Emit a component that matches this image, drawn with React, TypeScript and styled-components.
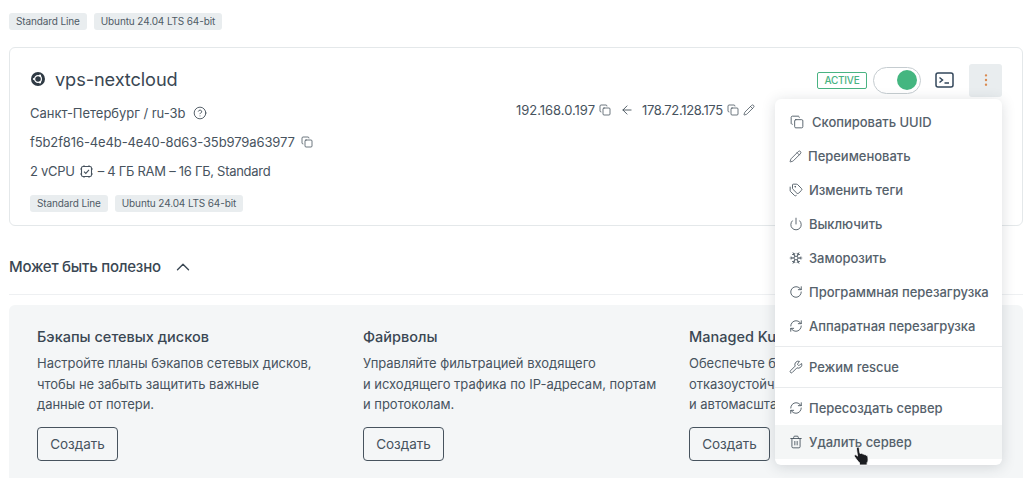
import React from "react";
import styled, { createGlobalStyle } from "styled-components";
import { ArrowLeft, ChevronUp, CircleHelp, Copy, EllipsisVertical, Pencil, Power, RefreshCw, RotateCw, Snowflake, Tags, Trash2, Wrench } from "lucide-react";

const Global = createGlobalStyle`
  html, body { margin: 0; padding: 0; background: #fff; overflow: hidden; }
  body { font-family: Inter, "Noto Sans", sans-serif; color: #47535e; }
  * { box-sizing: border-box; }
`;
const Page = styled.div`
  position: relative; width: 1024px; height: 478px; overflow: hidden;
  padding: 13px 1px 0 9px;
`;
const TagRow = styled.div`display: flex; gap: 7px;`;
const Tag = styled.span`
  height: 17px; padding: 0 7px; border-radius: 3px; background: #e9edef;
  font-size: 10px; line-height: 17px; color: #4f5b66; letter-spacing: -0.12px; white-space: nowrap;
`;
const Card = styled.section`
  height: 179px; margin-top: 17px; border: 1px solid #e4e8ea; border-radius: 6px; padding: 20px 20px 0;
  display: flex; flex-direction: column; position: relative;
`;
const TitleRow = styled.div`display: flex; align-items: center; height: 24px; gap: 9px;`;
const OsLogo = styled.svg`width: 16px; height: 16px; margin-top: -2px;`;
const Title = styled.h1`margin: -3px 0 0; font-size: 18.2px; font-weight: 400; color: #3a4753; line-height: 24px; letter-spacing: -0.1px;`;
const Controls = styled.div`margin-left: auto; display: flex; align-items: center;`;
const Active = styled.span`
  width: 50px; height: 17px; border: 1px solid #49b382; border-radius: 2px; color: #49b382;
  font-size: 10px; font-weight: 500; line-height: 15px; text-align: center; letter-spacing: -0.25px;
`;
const Switch = styled.div`
  width: 48px; height: 27px; margin-left: 6px; border: 1px solid #c5ccd0; border-radius: 14px;
  display: flex; align-items: center; justify-content: flex-end; padding-right: 3px;
`;
const Knob = styled.span`width: 20px; height: 20px; border-radius: 50%; background: #44b680;`;
const Terminal = styled.svg`margin-left: 14px; width: 20px; height: 18px;`;
const MoreButton = styled.button`
  width: 33px; height: 33px; margin-left: 14px; border: 0; border-radius: 3px; background: #e9edef; padding: 0;
  display: flex; align-items: center; justify-content: center; color: #d9894f;
`;
const InfoGrid = styled.div`display: grid; grid-template-columns: 486px auto; margin-top: 6px;`;
const Column = styled.div`display: flex; flex-direction: column;`;
const IpColumn = styled(Column)`margin-top: -3px;`;
const InfoLine = styled.div`
  height: 29px; display: flex; align-items: center; gap: 5px; font-size: 13px; color: #47535e; white-space: nowrap; letter-spacing: -0.03px;
`;
const UuidLine = styled(InfoLine)`letter-spacing: -0.11px;`;
const SpecLine = styled(InfoLine)`letter-spacing: -0.28px; gap: 5px; height: 30px;`;
const IpLine = styled(InfoLine)`gap: 4px;`;
const TightIp = styled.span`letter-spacing: -0.35px;`;
const Arrow = styled(ArrowLeft)`margin: 0 4px 0 5px;`;
const CardTags = styled(TagRow)`margin-top: 9px;`;
const Section = styled.div`height: 69px; border-bottom: 1px solid #eef0f2; display: flex; align-items: center; gap: 11px; padding-top: 13px;`;
const SectionTitle = styled.h2`margin: 0; font-size: 15px; font-weight: 500; color: #3a4753; line-height: 20px; letter-spacing: -0.24px;`;
const Panel = styled.div`
  margin-top: 10px; height: 190px; background: #f4f6f7; border-radius: 6px 6px 0 0; padding: 22px 0 0 28px;
  display: grid; grid-template-columns: repeat(3, 326px);
`;
const Offer = styled.div`display: flex; flex-direction: column; align-items: flex-start;`;
const OfferTitle = styled.h3`margin: 0; font-size: 14.5px; line-height: 20px; font-weight: 500; color: #3a4753; white-space: nowrap;`;
const OfferText = styled.p`margin: 6px 0 0; font-size: 13px; line-height: 20.5px; color: #47535e; white-space: pre-line; letter-spacing: -0.02px;`;
const CreateButton = styled.button`
  margin-top: 12px; width: 81px; height: 34px; border: 1px solid #47535e; border-radius: 4px; background: transparent;
  font: 400 13.5px Inter, sans-serif; color: #47535e;
`;
const Menu = styled.div`
  position: absolute; left: 775px; top: 99px; width: 227px; height: 366px; background: #fff; border-radius: 6px;
  box-shadow: 0 2px 14px rgba(40, 55, 65, 0.17); padding: 6px 0;
  display: flex; flex-direction: column;
`;
const Item = styled.div<{ $hover?: boolean; $first?: boolean }>`
  height: 34px; flex: none; display: flex; align-items: center; gap: ${(p) => (p.$first ? 8 : 6)}px; padding-left: ${(p) => (p.$first ? 15 : 14)}px;
  font-size: 13px; font-weight: 500; color: #55616b; white-space: nowrap; letter-spacing: -0.03px;
  background: ${(p) => (p.$hover ? "#f4f6f6" : "transparent")};
`;
const Divider = styled.div`height: 7px; flex: none; display: flex; align-items: center; &::after { content: ""; flex: 1; height: 1px; background: #e9ebed; }`;
const Pointer = styled.svg`position: absolute; left: 853px; top: 446px; width: 17px; height: 20px;`;

const CpuCheck = () => (
  <svg width="13" height="13" viewBox="0 0 13 13" fill="none" stroke="#47535e" strokeWidth="1.1">
    <rect x="1.5" y="1.5" width="10" height="10" rx="1.5" />
    <path d="M4 6.6l1.8 1.8L9 4.8" />
    <path d="M4 0v1.5M9 0v1.5M4 11.5V13M9 11.5V13M0 4h1.5M0 9h1.5M11.5 4H13M11.5 9H13" strokeWidth="0.8" />
  </svg>
);
const Ubuntu = () => (
  <OsLogo viewBox="0 0 16 16">
    <circle cx="8" cy="8" r="7" fill="#2f3a44" />
    <circle cx="8" cy="8" r="3.4" fill="none" stroke="#fff" strokeWidth="1.2" />
    <circle cx="3.9" cy="8" r="1.1" fill="#fff" />
    <circle cx="10" cy="4.5" r="1.1" fill="#fff" />
    <circle cx="10" cy="11.5" r="1.1" fill="#fff" />
  </OsLogo>
);
const TagPair = () => (
  <>
    <Tag>Standard Line</Tag>
    <Tag>Ubuntu 24.04 LTS 64-bit</Tag>
  </>
);
const small = { size: 12, strokeWidth: 1.5, color: "#3f4b56" };
const mi = { size: 14, strokeWidth: 1.5, color: "#47535e" };

const offers = [
  ["Бэкапы сетевых дисков", "Настройте планы бэкапов сетевых дисков,\nчтобы не забыть защитить важные\nданные от потери."],
  ["Файрволы", "Управляйте фильтрацией входящего\nи исходящего трафика по IP-адресам, портам\nи протоколам."],
  ["Managed Kubernetes", "Обеспечьте безопасность,\nотказоустойчивость\nи автомасштабирование"],
];

export default function App() {
  return (
    <Page>
      <Global />
      <TagRow><TagPair /></TagRow>
      <Card>
        <TitleRow>
          <Ubuntu />
          <Title>vps-nextcloud</Title>
          <Controls>
            <Active>ACTIVE</Active>
            <Switch><Knob /></Switch>
            <Terminal viewBox="0 0 20 18" fill="none" stroke="#33475b" strokeWidth="1.5">
              <rect x="1" y="2" width="17" height="14" rx="2" />
              <path d="M4.5 6.5l3 2.5-3 2.5M9.5 12h4.5" />
            </Terminal>
            <MoreButton><EllipsisVertical size={16} strokeWidth={1.6} /></MoreButton>
          </Controls>
        </TitleRow>
        <InfoGrid>
          <Column>
            <InfoLine>Санкт-Петербург / ru-3b <CircleHelp size={14} strokeWidth={1.5} color="#3f4b56" style={{ marginLeft: 2 }} /></InfoLine>
            <UuidLine>f5b2f816-4e4b-4e40-8d63-35b979a63977 <Copy {...small} style={{ marginLeft: 1 }} /></UuidLine>
            <SpecLine>2 vCPU <CpuCheck /> – 4 ГБ RAM – 16 ГБ, Standard</SpecLine>
            <CardTags><TagPair /></CardTags>
          </Column>
          <IpColumn>
            <IpLine>192.168.0.197 <Copy {...small} /><Arrow {...small} size={14} /><TightIp>178.72.128.175</TightIp> <Copy {...small} /><Pencil {...small} /></IpLine>
          </IpColumn>
        </InfoGrid>
      </Card>
      <Section>
        <SectionTitle>Может быть полезно</SectionTitle>
        <ChevronUp size={22} strokeWidth={1.5} color="#3a4753" />
      </Section>
      <Panel>
        {offers.map(([title, text]) => (
          <Offer key={title}>
            <OfferTitle>{title}</OfferTitle>
            <OfferText>{text}</OfferText>
            <CreateButton>Создать</CreateButton>
          </Offer>
        ))}
      </Panel>
      <Menu>
        <Item $first><Copy {...mi} />Скопировать UUID</Item>
        <Item><Pencil {...mi} size={13} />Переименовать</Item>
        <Item><Tags {...mi} />Изменить теги</Item>
        <Item><Power {...mi} />Выключить</Item>
        <Item><Snowflake {...mi} />Заморозить</Item>
        <Item><RotateCw {...mi} />Программная перезагрузка</Item>
        <Item><RefreshCw {...mi} />Аппаратная перезагрузка</Item>
        <Divider />
        <Item><Wrench {...mi} />Режим rescue</Item>
        <Divider />
        <Item><RefreshCw {...mi} />Пересоздать сервер</Item>
        <Item $hover><Trash2 {...mi} />Удалить сервер</Item>
      </Menu>
      <Pointer viewBox="0 0 17 20">
        <path d="M4 1.5c.9-.8 2-.3 2.2.8L7 7.5l1-.3c.8-.2 1.4 0 1.7.6l.2.4c.8-.3 1.5-.1 1.8.6.8-.2 1.5 0 1.8.8.7 0 1.300.4 1.400 1.200l.2 3.200c0 1.200-.4 2-1 2.700V19H6.500v-2.200C5 15.500 3 12.800 1.500 10.500c-.5-.9 0-1.800 1-1.700.7 0 1.300.6 2 1.300L3.500 3c-.1-.6.1-1.100.5-1.500z" fill="#1b1d20" stroke="#fff" strokeWidth="0.8" />
      </Pointer>
    </Page>
  );
}
